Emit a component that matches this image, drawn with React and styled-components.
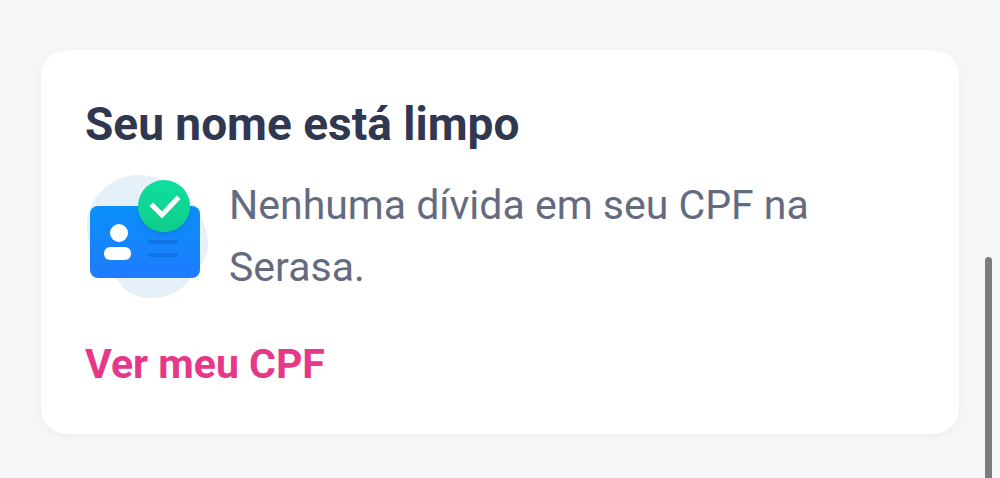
import React from "react";
import styled, { createGlobalStyle } from "styled-components";

const GlobalStyle = createGlobalStyle`
  *, *::before, *::after { box-sizing: border-box; }
  body { margin: 0; background: #f5f6f8; font-family: Roboto, "Liberation Sans", sans-serif; }
`;

const Page = styled.main`
  position: relative;
  min-height: 100vh;
  padding: 50px 41px 44px;
`;

const Card = styled.section`
  display: flex;
  flex-direction: column;
  align-items: flex-start;
  padding: 44px 44px 42px;
  border-radius: 26px;
  background: #fff;
  box-shadow: 0 2px 8px rgba(40, 50, 90, 0.04);
`;

const Title = styled.h1`
  margin: 0;
  font-size: 46px;
  line-height: 60px;
  font-weight: 700;
  color: #2f3751;
`;

const Summary = styled.div`
  display: flex;
  align-items: center;
  gap: 20px;
  margin-top: 20px;
`;

const Illustration = styled.svg`
  flex: none;
  width: 124px;
  height: 124px;
`;

const Description = styled.p`
  margin: 0;
  max-width: 620px;
  font-size: 41px;
  line-height: 62px;
  color: #646b80;
`;

const CardLink = styled.a`
  margin-top: 38px;
  font-size: 41px;
  line-height: 56px;
  font-weight: 700;
  color: #e63888;
  text-decoration: none;
`;

const ScrollThumb = styled.div`
  position: absolute;
  top: 257px;
  right: 8px;
  bottom: 0;
  width: 7px;
  border-radius: 4px 4px 0 0;
  background: #7b7c7e;
`;

function CardIllustration() {
  return (
    <Illustration viewBox="0 0 124 124" aria-hidden="true">
      <defs>
        <linearGradient id="blue" x1="0" y1="0" x2="0" y2="1">
          <stop offset="0" stopColor="#0a8ffa" />
          <stop offset="1" stopColor="#1f7cfe" />
        </linearGradient>
        <linearGradient id="green" x1="0" y1="0" x2="0" y2="1">
          <stop offset="0" stopColor="#0fdf9f" />
          <stop offset="1" stopColor="#10cc8b" />
        </linearGradient>
        <filter id="badgeShadow" x="-20%" y="-20%" width="140%" height="150%">
          <feDropShadow dx="0" dy="2" stdDeviation="2" floodColor="#0756b8" floodOpacity="0.3" />
        </filter>
        <clipPath id="cardShape">
          <rect x="5" y="32" width="110" height="72" rx="8" />
        </clipPath>
      </defs>
      <path d="M51 1C70 1 88 7 102 22C116 39 123 55 123 72C122 86 114 93 107 103C97 117 84 124 66 124C48 124 38 116 31 104C16 92 5 80 2 57C-1 26 24 3 51 1Z" fill="#e5f0f8" />
      <rect x="5" y="32" width="110" height="72" rx="8" fill="url(#blue)" />
      <circle cx="34" cy="59" r="9" fill="#fff" />
      <rect x="19" y="73" width="27" height="13" rx="6" fill="#fff" />
      <path d="M65 68H91M65 81H91" stroke="#1074e8" strokeWidth="4" strokeLinecap="round" />
      <g clipPath="url(#cardShape)">
        <circle cx="79" cy="32" r="26" fill="#10cc8b" filter="url(#badgeShadow)" />
      </g>
      <circle cx="79" cy="32" r="26" fill="url(#green)" />
      <path d="M68 32L77 41L92 25" fill="none" stroke="#fff" strokeWidth="5" strokeLinecap="square" />
    </Illustration>
  );
}

export default function App() {
  return (
    <>
      <GlobalStyle />
      <Page>
        <Card>
          <Title>Seu nome está limpo</Title>
          <Summary>
            <CardIllustration />
            <Description>Nenhuma dívida em seu CPF na Serasa.</Description>
          </Summary>
          <CardLink href="#cpf">Ver meu CPF</CardLink>
        </Card>
        <ScrollThumb />
      </Page>
    </>
  );
}
